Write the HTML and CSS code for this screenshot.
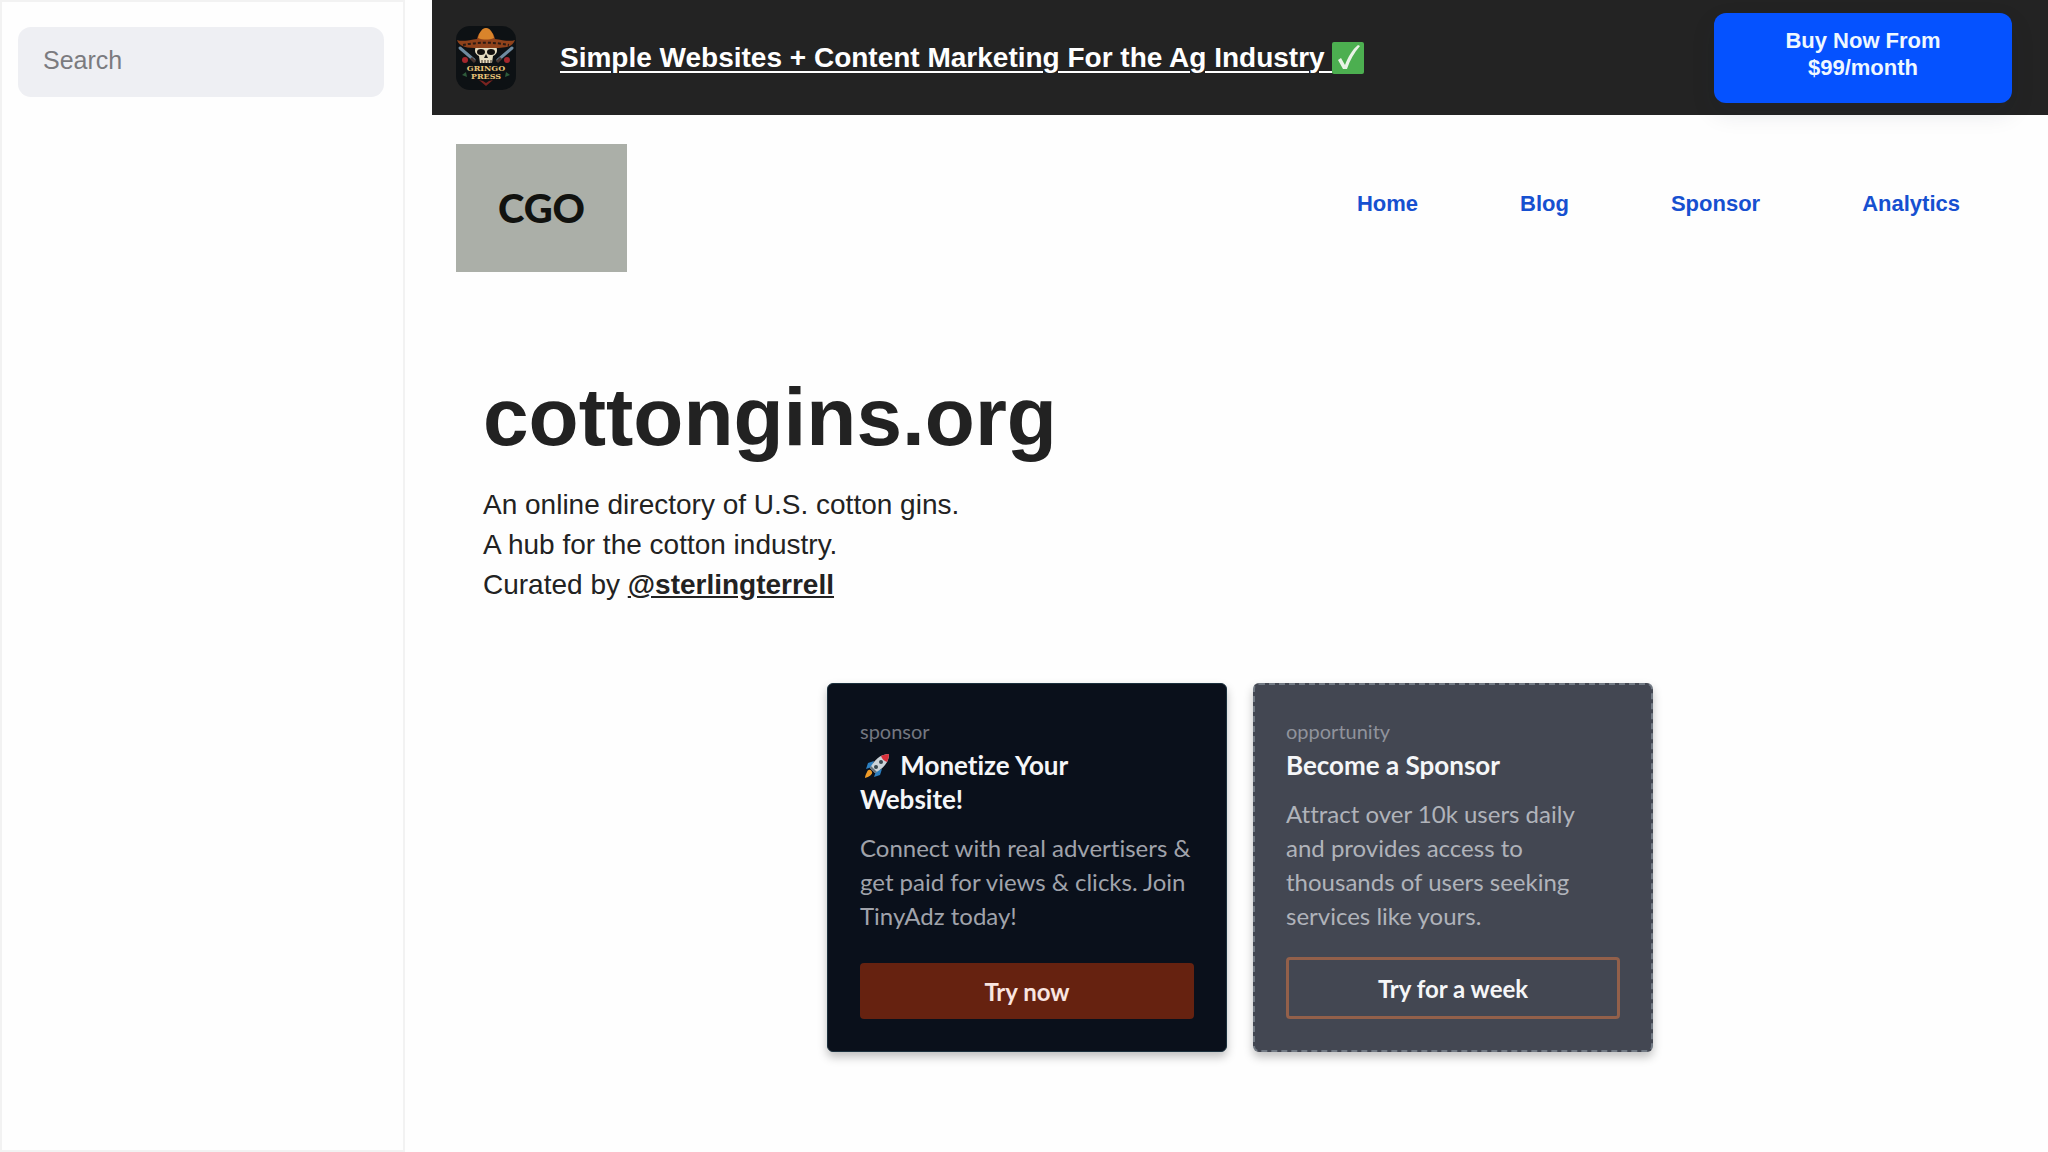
FILE: index.html
```html
<!DOCTYPE html>
<html lang="en">
<head>
<meta charset="UTF-8">
<meta name="viewport" content="width=device-width, initial-scale=1.0">
<title>cottongins.org</title>
<link rel="stylesheet" href="styles.css">
</head>
<body>
<aside class="sidebar">
    <input type="search" class="search" placeholder="Search" aria-label="Search">
</aside>

<div class="page">
    <div class="banner">
        <!-- Gringo Press badge -->
        <svg class="banner-logo" viewBox="0 0 60 64" role="img" aria-label="Gringo Press">
            <rect width="60" height="64" rx="14" fill="#0d1114"/>
            <g fill="#a3262c">
                <circle cx="9" cy="34" r="3"/>
                <circle cx="51" cy="34" r="3"/>
                <path d="M23 54l7 6 7-6-4 1-3 2-3-2z" fill="#7a2320"/>
            </g>
            <g fill="#2f5b3b">
                <path d="M6 49l4-3 1 5z"/>
                <path d="M54 49l-4-3-1 5z"/>
            </g>
            <g stroke="#6f8ba0" stroke-width="3" stroke-linecap="round">
                <path d="M4 22l14 12"/>
                <path d="M56 22L42 34"/>
            </g>
            <path d="M15 32l4 4M45 32l-4 4" stroke="#4a3630" stroke-width="3"/>
            <path d="M20 20h20c2 5 1 8-3 10l-1 7H24l-1-7c-4-2-5-5-3-10z" fill="#e6dcc0"/>
            <ellipse cx="25" cy="26" rx="4" ry="3" fill="#14110f"/>
            <ellipse cx="35" cy="26" rx="4" ry="3" fill="#14110f"/>
            <path d="M30 28l-2 4h4z" fill="#14110f"/>
            <path d="M26 34v3M29 34v3M32 34v3M35 34v3" stroke="#3a3026"/>
            <path d="M1 14c5 2 13 0 20-1 1-5 4-9 9-11 5 2 8 6 9 11 7 1 15 3 20 1-3 9-14 8-29 8S4 23 1 14z" fill="#8f421b"/>
            <path d="M22 12c1-5 4-10 8-10s7 5 8 10c-5 2-11 2-16 0z" fill="#d9842b"/>
            <path d="M7 19c14-3 32-3 46 0" fill="none" stroke="#2b1b14" stroke-width="2" stroke-dasharray="3 2"/>
            <text class="badge-text" x="30" y="45">GRINGO</text>
            <text class="badge-text" x="30" y="53">PRESS</text>
        </svg>
        <a class="banner-link" href="#">Simple Websites + Content Marketing For the Ag Industry <svg class="check" viewBox="0 0 32 32" role="img" aria-label="Check">
            <rect width="32" height="32" rx="2" fill="#4caf50"/>
            <path d="M6 18l3-2 4 7C16 15 20 8 26 3l2 1c-6 7-10 14-13 23h-4z" fill="#e9f3e7"/>
        </svg></a>
        <button class="buy">Buy Now From $99/month</button>
    </div>

    <header class="header">
        <a class="logo" href="#">CGO</a>
        <nav class="nav">
            <a href="#">Home</a>
            <a href="#">Blog</a>
            <a href="#">Sponsor</a>
            <a href="#">Analytics</a>
        </nav>
    </header>

    <section class="intro">
        <h1>cottongins.org</h1>
        <p>An online directory of U.S. cotton gins.<br>
        A hub for the cotton industry.<br>
        Curated by <a href="#">@sterlingterrell</a></p>
    </section>

    <section class="ads">
        <div class="ad">
            <span class="ad-label">sponsor</span>
            <h2><svg class="rocket" viewBox="0 0 26 26" role="img" aria-label="Rocket">
                <path d="M10 8L4 10l-2 6 6-2zM18 16l-2 6-6 2 2-6z" fill="#2c7fc0"/>
                <path d="M3 19c1-3 4-3 5 0 1 2-3 5-7 6 0-2 1-4 2-6z" fill="#ee9b28"/>
                <path d="M25 1c-8 0-14 5-19 14l5 5C20 15 25 9 25 1z" fill="#cbd3d8"/>
                <path d="M25 1c-3 0-6 1-8 2 1 3 3 5 6 6 1-2 2-5 2-8z" fill="#d8303b"/>
                <path d="M6 15l5 5 2-1-6-6z" fill="#65727c"/>
                <circle cx="17" cy="9" r="2" fill="#37474f"/>
                <circle cx="12" cy="14" r="2" fill="#37474f"/>
            </svg> Monetize Your<br>Website!</h2>
            <p>Connect with real advertisers &amp; get paid for views &amp; clicks. Join TinyAdz today!</p>
            <button class="ad-button">Try now</button>
        </div>
        <div class="ad ad-open">
            <span class="ad-label">opportunity</span>
            <h2>Become a Sponsor</h2>
            <p>Attract over 10k users daily<br>
            and provides access to<br>
            thousands of users seeking<br>
            services like yours.</p>
            <button class="ad-button">Try for a week</button>
        </div>
    </section>
</div>
</body>
</html>
```

FILE: styles.css
```css
* {
    box-sizing: border-box;
}
body {
    font-family: "Liberation Sans", Arial, sans-serif;
    margin: 0;
    display: flex;
    gap: 27px;
    min-height: 100vh;
    background-color: #fefefe;
    color: #222;
}
.sidebar {
    flex: 0 0 405px;
    padding: 25px 19px 25px 16px;
    border: 2px solid #f2f2f2;
}
.search {
    width: 100%;
    height: 70px;
    padding: 0 25px 4px;
    border: none;
    border-radius: 13px;
    background-color: #eeeff3;
    font-family: inherit;
    font-size: 25px;
    color: #222;
}
.search::placeholder {
    color: #7b7b7f;
}
.page {
    flex: 1;
    min-width: 0;
}

/* top banner */
.banner {
    display: flex;
    align-items: center;
    min-height: 115px;
    padding: 0 36px 0 24px;
    background-color: #232323;
}
.banner-logo {
    width: 60px;
    height: 64px;
    margin-right: 44px;
}
.badge-text {
    font-family: "DejaVu Serif", serif;
    font-size: 8px;
    font-weight: bold;
    text-anchor: middle;
    fill: #e8c579;
}
.banner-link {
    color: #fff;
    font-size: 28px;
    font-weight: bold;
    text-decoration: underline;
    text-underline-offset: 4px;
    text-decoration-thickness: 2px;
}
.check {
    width: 32px;
    height: 32px;
    vertical-align: -7px;
}
.buy {
    width: 298px;
    height: 90px;
    margin-left: auto;
    padding: 0 60px 8px;
    border: none;
    border-radius: 12px;
    background-color: #0552ff;
    box-shadow: 0 10px 24px rgba(20, 40, 60, 0.1);
    color: #eff8ff;
    font-family: inherit;
    font-size: 22px;
    font-weight: bold;
    line-height: 27px;
    cursor: pointer;
}

/* logo and menu */
.header {
    display: flex;
    justify-content: space-between;
    align-items: flex-start;
    padding: 29px 88px 0 24px;
}
.logo {
    display: flex;
    justify-content: center;
    align-items: center;
    width: 171px;
    height: 128px;
    background-color: #abafa8;
    color: #11120f;
    font-family: Lato, sans-serif;
    font-size: 40px;
    font-weight: 900;
    text-decoration: none;
}
.nav {
    display: flex;
    gap: 102px;
    padding-top: 46px;
}
.nav a {
    color: #1650d0;
    font-size: 22px;
    font-weight: bold;
    line-height: 28px;
    text-decoration: none;
}

.intro {
    padding: 96px 51px 0;
}
.intro h1 {
    margin: 0;
    font-size: 82px;
    line-height: 98px;
}
.intro p {
    margin: 19px 0 0;
    font-size: 28px;
    line-height: 40px;
}
.intro a {
    color: inherit;
    font-weight: bold;
}

/* sponsor cards */
.ads {
    display: flex;
    justify-content: center;
    gap: 26px;
    padding: 78px 24px 40px;
}
.ad {
    display: flex;
    flex-direction: column;
    width: 400px;
    min-height: 369px;
    padding: 30px 32px 32px;
    border: 1px solid #1b303d;
    border-radius: 6px;
    background-color: #0a101b;
    box-shadow: 0 5px 10px rgba(0, 0, 0, 0.25);
    color: #a0a3ab;
    font-family: Lato, sans-serif;
    font-variant-ligatures: none;
}
.ad-label {
    font-size: 20px;
    line-height: 34px;
    color: #747780;
}
.ad h2 {
    margin: 0 0 15px;
    color: #f5f6f8;
    font-size: 26px;
    line-height: 34px;
}
.ad p {
    margin: 0;
    font-size: 24px;
    line-height: 34px;
}
.ad-button {
    margin-top: auto;
    height: 56px;
    border: none;
    border-radius: 4px;
    background-color: #662210;
    color: #f9e5e0;
    font-family: inherit;
    font-size: 24px;
    font-weight: bold;
    cursor: pointer;
}
.rocket {
    width: 26px;
    height: 26px;
    margin: 0 4px;
    vertical-align: -4px;
}
.ad-open {
    padding: 29px 31px 31px;
    border: 2px dashed #727a84;
    background-color: #434752;
    color: #b0b3ba;
}
.ad-open .ad-label {
    color: #90939c;
}
.ad-open .ad-button {
    height: 62px;
    border: 3px solid #93604a;
    background-color: transparent;
    color: #f5f6f8;
}
```
